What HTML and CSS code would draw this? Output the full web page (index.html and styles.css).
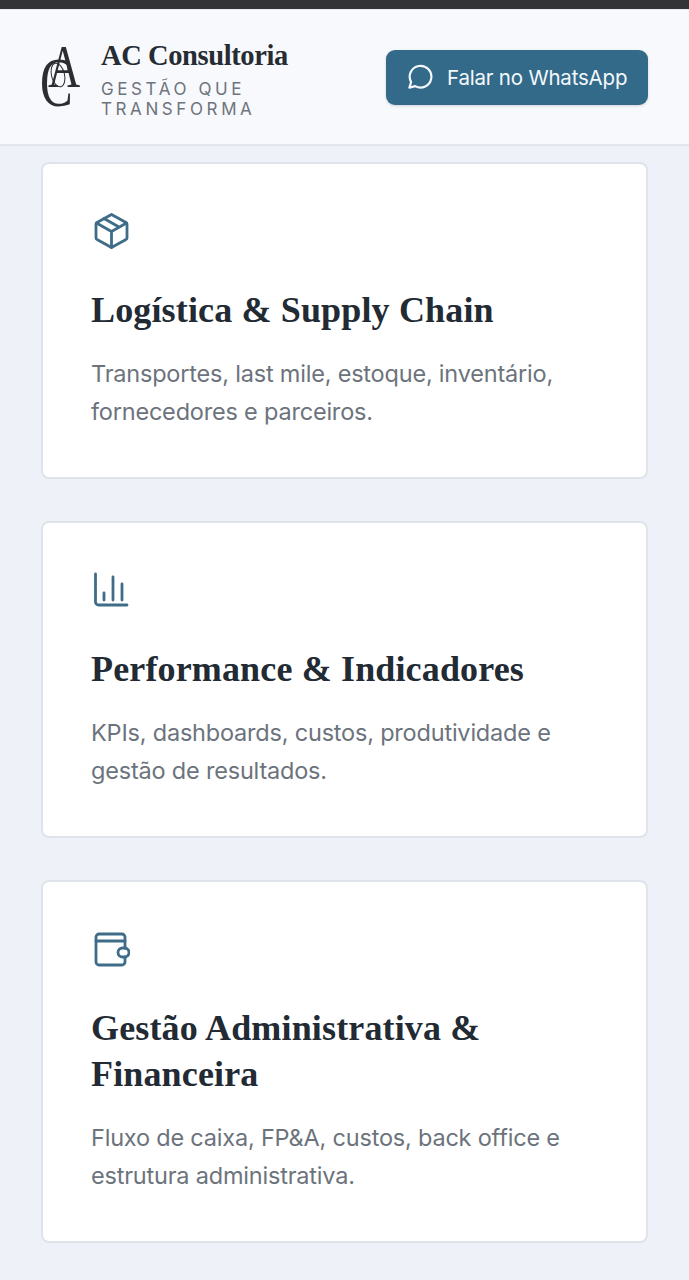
FILE: index.html
```html
<!doctype html>
<html lang="pt-BR">
<head>
    <meta charset="UTF-8">
    <meta name="viewport" content="width=device-width, initial-scale=1.0">
    <title>AC Consultoria</title>
    <link rel="stylesheet" href="styles.css">
</head>
<body>
    <div class="top-strip"></div>

    <!-- Header -->
    <header class="site-header">
        <div class="brand">
            <svg class="brand-mark" viewBox="0 0 41 66" aria-hidden="true">
                <text class="mark-c" transform="translate(-1 62) scale(0.7 1)">C</text>
                <text class="mark-a" transform="translate(7 43) scale(0.72 1)">A</text>
                <ellipse class="mark-loop" cx="17" cy="31" rx="6.500" ry="12" transform="rotate(-14 17 31)"/>
            </svg>
            <div class="brand-text">
                <div class="brand-name">AC Consultoria</div>
                <div class="brand-tag">GESTÃO QUE TRANSFORMA</div>
            </div>
        </div>
        <a href="#" class="whatsapp-btn">
            <svg class="whatsapp-icon" viewBox="0 0 24 24" fill="none" stroke="currentColor" stroke-width="2" stroke-linecap="round" stroke-linejoin="round">
                <path d="M2.200 21.800l1.600-5.200A10 10 0 1 1 7.600 20.400z"/>
            </svg>
            <span>Falar no WhatsApp</span>
        </a>
    </header>

    <!-- Service cards -->
    <main class="cards">
        <section class="card">
            <svg class="card-icon" viewBox="0 0 38 36" fill="none" stroke="currentColor" stroke-width="2.800" stroke-linecap="round" stroke-linejoin="round">
                <path d="M19.500 1.500L34 9.500a1.500 1.500 0 0 1 1 1.400v14.200a1.500 1.500 0 0 1-1 1.400L19.500 34.500 5 26.500a1.500 1.500 0 0 1-1-1.400V10.900a1.500 1.500 0 0 1 1-1.400z"/>
                <path d="M4.500 10l15 8.500 15-8.500M19.500 18.500v16M12 5.500l15 8.500"/>
            </svg>
            <h2>Logística &amp; Supply Chain</h2>
            <p>Transportes, last mile, estoque, inventário, fornecedores e parceiros.</p>
        </section>

        <section class="card">
            <svg class="card-icon" viewBox="0 0 38 36" fill="none" stroke="currentColor" stroke-width="2.800" stroke-linecap="round" stroke-linejoin="round">
                <path d="M3.500 2v28a3 3 0 0 0 3 3H35"/>
                <path d="M12 21v7M21 5v23M30 12v16"/>
            </svg>
            <h2>Performance &amp; Indicadores</h2>
            <p>KPIs, dashboards, custos, produtividade e gestão de resultados.</p>
        </section>

        <section class="card">
            <svg class="card-icon" viewBox="0 0 38 36" fill="none" stroke="currentColor" stroke-width="2.800" stroke-linecap="round" stroke-linejoin="round">
                <path d="M33 17V6a3 3 0 0 0-3-3H7a3 3 0 0 0-3 3v25a3 3 0 0 0 3 3h23a3 3 0 0 0 3-3v-5"/>
                <path d="M4 10h29"/>
                <rect x="26" y="17" width="11" height="9" rx="4.500"/>
            </svg>
            <h2>Gestão Administrativa &amp; Financeira</h2>
            <p>Fluxo de caixa, FP&amp;A, custos, back office e estrutura administrativa.</p>
        </section>
    </main>
</body>
</html>
```

FILE: styles.css
```css
* {
    margin: 0;
    padding: 0;
    box-sizing: border-box;
}

body {
    font-family: 'Inter', 'Noto Sans', sans-serif;
    background-color: #eef2f8;
    color: #1c2530;
}

.top-strip {
    height: 9px;
    background-color: #323436;
}

/* Header */
.site-header {
    height: 137px;
    display: flex;
    justify-content: space-between;
    align-items: center;
    padding: 0 41px;
    background-color: #f8f9fc;
    border-top: 1px solid #e9ebef;
    border-bottom: 2px solid #e3e7ed;
}

.brand {
    display: flex;
    align-items: center;
    gap: 19px;
}

.brand-mark {
    width: 41px;
    height: 66px;
    overflow: visible;
    fill: #2a2e33;
}

.mark-a {
    font-family: 'Liberation Serif', serif;
    font-size: 62px;
}

.mark-c {
    font-family: 'Liberation Serif', serif;
    font-size: 70px;
}

.mark-loop {
    fill: none;
    stroke: #2a2e33;
    stroke-width: 1;
}

.brand-text {
    padding-top: 3px;
}

.brand-name {
    font-family: 'Liberation Serif', serif;
    font-size: 28.5px;
    font-weight: 700;
    line-height: 34px;
    letter-spacing: -0.4px;
    color: #262c33;
}

.brand-tag {
    width: 170px;
    margin-top: 6px;
    font-size: 17px;
    line-height: 20px;
    letter-spacing: 3.6px;
    color: #6e747c;
}

.whatsapp-btn {
    display: flex;
    align-items: center;
    gap: 14px;
    width: 262px;
    height: 55px;
    padding: 0 21px;
    background-color: #336a8a;
    border-radius: 9px;
    color: #f4f8fb;
    font-size: 20.5px;
    letter-spacing: -0.2px;
    white-space: nowrap;
    text-decoration: none;
    box-shadow: 0 1px 3px rgba(0, 0, 0, 0.15);
}

.whatsapp-icon {
    width: 26px;
    height: 26px;
    flex-shrink: 0;
}

/* Cards */
.cards {
    display: flex;
    flex-direction: column;
    gap: 42px;
    padding: 16px 41px 38px;
}

.card {
    background: #fff;
    border: 2px solid #dfe3ea;
    border-radius: 8px;
    padding: 49px 48px 46px;
}

.card-icon {
    display: block;
    width: 38px;
    height: 36px;
    margin-left: 1px;
    color: #3f6c89;
}

.card h2 {
    margin-top: 38px;
    font-family: 'Liberation Serif', serif;
    font-size: 36px;
    font-weight: 700;
    line-height: 46px;
    letter-spacing: 0.15px;
    color: #222a34;
}

.card p {
    margin-top: 22px;
    font-size: 23.5px;
    line-height: 38px;
    letter-spacing: -0.2px;
    color: #6c737c;
}
```
